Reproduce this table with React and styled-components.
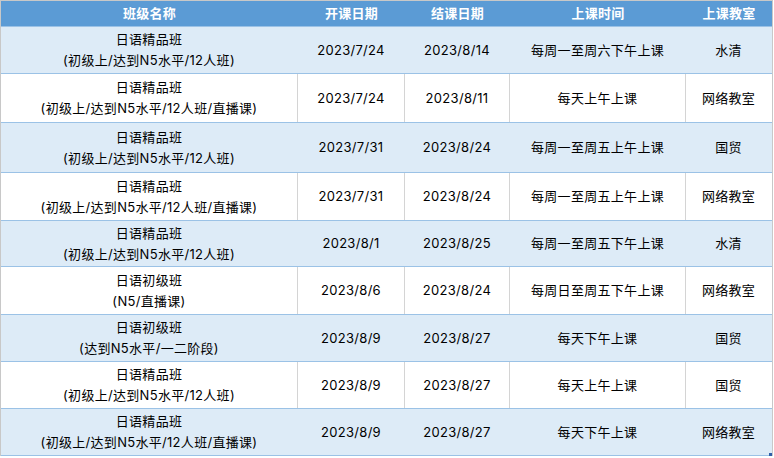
import React from "react";
import styled, { createGlobalStyle } from "styled-components";

const Global = createGlobalStyle`
  html, body { margin: 0; padding: 0; background: #fff; }
  body { font-family: Inter, "Noto Sans CJK SC", sans-serif; }
`;

const COLS = "297px 107px 105px 176px 86px";

const Table = styled.div`
  position: relative;
  width: 773px;
  box-sizing: border-box;
  border-left: 1px solid #c8c8c8;
  border-top: 1px solid #c8c8c8;
  border-right: 1px solid #c8c8c8;
  font-family: Inter, "Noto Sans CJK SC", sans-serif;
  font-size: 13px;
  letter-spacing: 0.3px;
  color: #000;
`;

const Header = styled.div`
  display: grid;
  grid-template-columns: ${COLS};
  height: 26px;
  box-sizing: border-box;
  background: #5b9bd5;
  border-bottom: 1px solid #9bc2e6;
`;

const HeadCell = styled.div`
  display: flex;
  align-items: center;
  justify-content: center;
  color: #fff;
  font-weight: 700;
  line-height: 1;
`;

const Row = styled.div`
  display: grid;
  grid-template-columns: ${COLS};
  box-sizing: border-box;
  height: ${(p) => p.$h}px;
  background: ${(p) => (p.$shaded ? "#ddebf7" : "#ffffff")};
  border-bottom: 1px solid #9bc2e6;
`;

const Cell = styled.div`
  display: flex;
  flex-direction: column;
  align-items: center;
  justify-content: center;
  text-align: center;
  line-height: 21px;
  white-space: nowrap;
  box-sizing: border-box;
  border-right: 1px solid ${(p) => (p.$last ? "transparent" : p.$shaded ? "transparent" : "#d4d4d4")};
`;

const Corner = styled.div`
  position: absolute;
  right: 0;
  bottom: 0;
  width: 3px;
  height: 3px;
  background: #2f5fa8;
`;

const rows = [
  ["日语精品班", "(初级上/达到N5水平/12人班)", "2023/7/24", "2023/8/14", "每周一至周六下午上课", "水清", 47],
  ["日语精品班", "(初级上/达到N5水平/12人班/直播课)", "2023/7/24", "2023/8/11", "每天上午上课", "网络教室", 49],
  ["日语精品班", "(初级上/达到N5水平/12人班)", "2023/7/31", "2023/8/24", "每周一至周五上午上课", "国贸", 50],
  ["日语精品班", "(初级上/达到N5水平/12人班/直播课)", "2023/7/31", "2023/8/24", "每周一至周五上午上课", "网络教室", 48],
  ["日语精品班", "(初级上/达到N5水平/12人班)", "2023/8/1", "2023/8/25", "每周一至周五下午上课", "水清", 46],
  ["日语初级班", "(N5/直播课)", "2023/8/6", "2023/8/24", "每周日至周五下午上课", "网络教室", 48],
  ["日语初级班", "(达到N5水平/一二阶段)", "2023/8/9", "2023/8/27", "每天下午上课", "国贸", 47],
  ["日语精品班", "(初级上/达到N5水平/12人班)", "2023/8/9", "2023/8/27", "每天上午上课", "国贸", 47],
  ["日语精品班", "(初级上/达到N5水平/12人班/直播课)", "2023/8/9", "2023/8/27", "每天下午上课", "网络教室", 47],
];

const headers = ["班级名称", "开课日期", "结课日期", "上课时间", "上课教室"];

export default function App() {
  return (
    <>
      <Global />
      <Table>
        <Header>
          {headers.map((h) => (
            <HeadCell key={h}>{h}</HeadCell>
          ))}
        </Header>
        {rows.map((r, i) => {
          const shaded = i % 2 === 0;
          return (
            <Row key={i} $shaded={shaded} $h={r[6]}>
              <Cell $shaded={shaded}>
                <span>{r[0]}</span>
                <span>{r[1]}</span>
              </Cell>
              <Cell $shaded={shaded}>{r[2]}</Cell>
              <Cell $shaded={shaded}>{r[3]}</Cell>
              <Cell $shaded={shaded}>{r[4]}</Cell>
              <Cell $shaded={shaded} $last>{r[5]}</Cell>
            </Row>
          );
        })}
        <Corner />
      </Table>
    </>
  );
}
